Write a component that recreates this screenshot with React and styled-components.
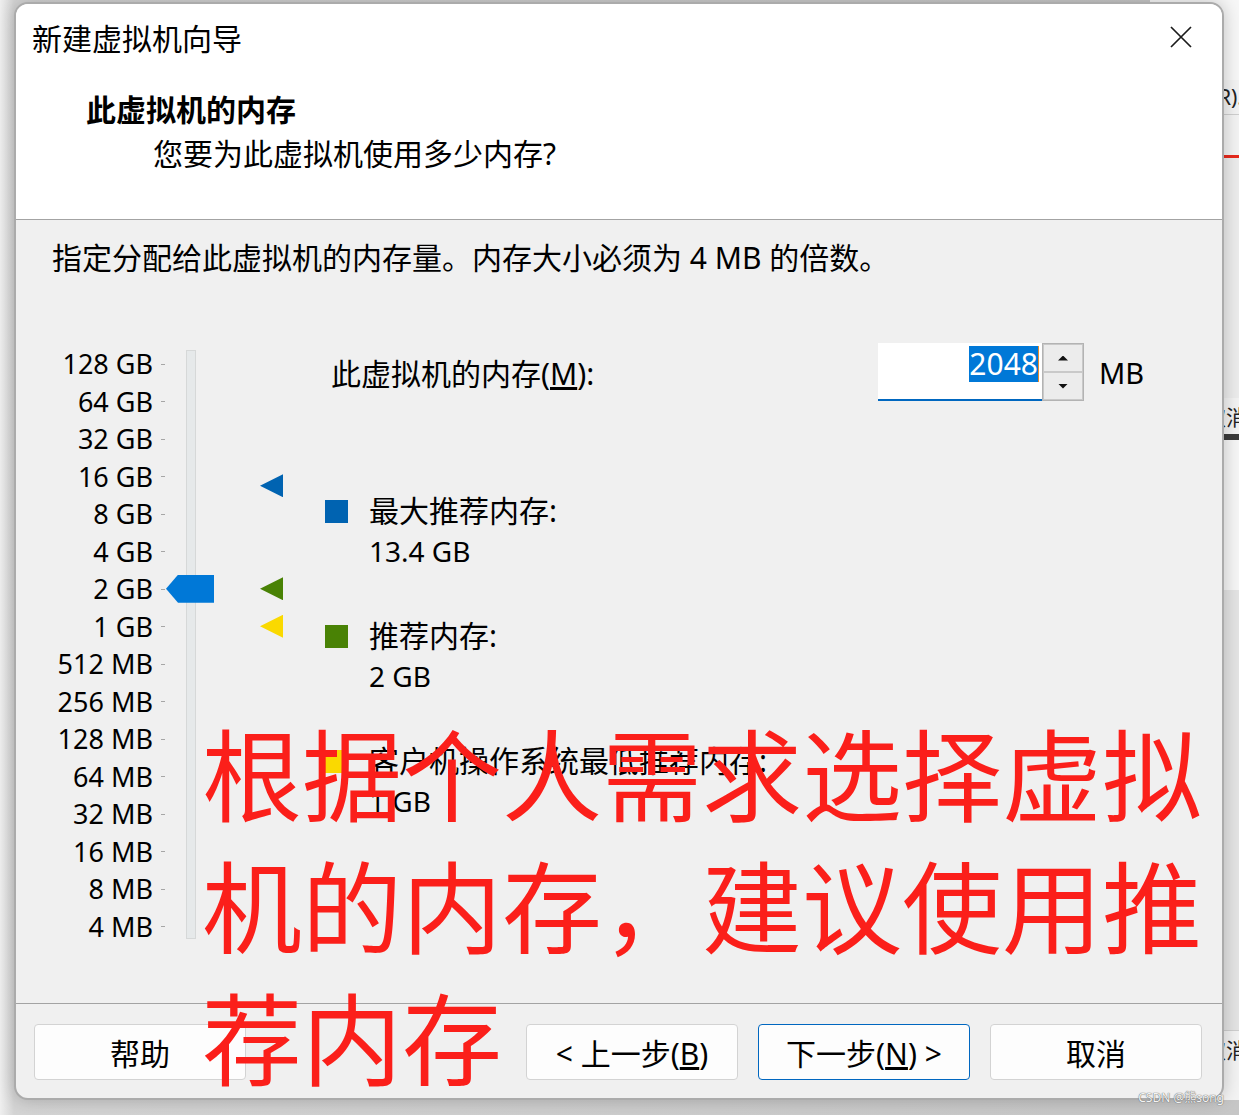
import React from 'react';
import styled, { createGlobalStyle } from 'styled-components';

const UI_FONT = `"Noto Sans", "Noto Sans CJK SC", sans-serif`;

const GlobalStyle = createGlobalStyle`
  html, body {
    margin: 0;
    padding: 0;
  }
  body {
    width: 1239px;
    height: 1115px;
    overflow: hidden;
    font-family: ${UI_FONT};
    color: #000;
  }
`;

const Desktop = styled.div`
  position: relative;
  width: 1239px;
  height: 1115px;
  box-sizing: border-box;
  padding: 2px 0 0 14px;
  overflow: hidden;
  background: linear-gradient(90deg, #efefef 0, #d4d4d4 14px, #c6c6c6 100%);
`;

/* window of the app behind the wizard: only a thin strip shows */
const BackWindow = styled.div`
  position: absolute;
  left: 1150px;
  top: 0;
  width: 120px;
  height: 1100px;
  background: #f3f3f3;
  display: flex;
  flex-direction: column;
  font-size: 21px;
  color: #222;
`;

const BackRow = styled.div`
  height: ${(p) => p.h}px;
  margin-top: ${(p) => p.mt || 0}px;
  background: ${(p) => p.bg || 'transparent'};
  border-bottom: ${(p) => (p.line ? '1px solid #cfcfcf' : 'none')};
  display: flex;
  align-items: center;
  padding-left: ${(p) => p.pl || 68}px;
  white-space: nowrap;
`;

const Dialog = styled.div`
  position: relative;
  z-index: 1;
  width: 1210px;
  height: 1098px;
  box-sizing: border-box;
  border: 2px solid #ababab;
  border-radius: 14px;
  background: #f0f0f0;
  overflow: hidden;
  box-shadow: 0 0 18px rgba(0, 0, 0, 0.22);
  display: flex;
  flex-direction: column;
`;

const Header = styled.div`
  background: #fff;
  height: 215px;
  border-bottom: 1px solid #a3a3a3;
  display: flex;
  flex-direction: column;
`;

const TitleBar = styled.div`
  height: 66px;
  display: flex;
  align-items: center;
  justify-content: space-between;
  padding: 0 30px 0 16px;
`;

const Title = styled.div`
  font-size: 30px;
  font-family: "Noto Sans CJK SC", sans-serif;
`;

const CloseButton = styled.button`
  border: 0;
  background: none;
  padding: 0;
  width: 22px;
  height: 22px;
  display: flex;
`;

const Heading = styled.div`
  margin-top: 18px;
  padding-left: 70px;
  line-height: 40px;
  font-size: 30px;
  font-weight: 700;
  font-family: "Noto Sans CJK SC", sans-serif;
`;

const SubHeading = styled.div`
  margin-top: 6px;
  padding-left: 137px;
  line-height: 40px;
  font-size: 30px;
`;

const Body = styled.div`
  flex: 1;
  display: flex;
  flex-direction: column;
  padding-top: 18px;
`;

const Description = styled.div`
  padding-left: 36px;
  line-height: 40px;
  font-size: 30px;
`;

const Main = styled.div`
  margin-top: 67px;
  display: flex;
  align-items: flex-start;
`;

const ScaleLabels = styled.div`
  display: flex;
  flex-direction: column;
  width: 150px;
`;

const ScaleLabel = styled.div`
  position: relative;
  height: 37.5px;
  line-height: 37.5px;
  text-align: right;
  padding-right: 13px;
  font-size: 27px;

  &::after {
    content: '';
    position: absolute;
    right: 1px;
    top: 50%;
    width: 4px;
    height: 1px;
    background: #a6a6a6;
  }
`;

const Track = styled.div`
  position: relative;
  margin: 5px 0 0 20px;
  width: 8px;
  height: 587px;
  background: #e6e9ea;
  border: 1px solid #d6d8d8;
`;

const Thumb = styled.div`
  position: absolute;
  left: -21px;
  width: 48px;
  height: 28px;
  background: #0078d7;
  clip-path: polygon(0 50%, 25% 0, 100% 0, 100% 100%, 25% 100%);
`;

const MarkerColumn = styled.div`
  position: relative;
  margin-left: 64px;
  width: 23px;
  height: 600px;
`;

const Marker = styled.div`
  position: absolute;
  left: 0;
  width: 23px;
  height: 23px;
  background: ${(p) => p.color};
  clip-path: polygon(0 50%, 100% 0, 100% 100%);
`;

const Panel = styled.div`
  margin: -2px 0 0 42px;
  display: flex;
  flex-direction: column;
`;

const MemoryRow = styled.div`
  display: flex;
  align-items: center;
  height: 58px;
`;

const MemoryLabel = styled.div`
  width: 547px;
  padding-left: 6px;
  font-size: 30px;
`;

const SpinInput = styled.div`
  width: 164px;
  height: 58px;
  box-sizing: border-box;
  background: #fff;
  border-bottom: 2px solid #0067c0;
  display: flex;
  justify-content: flex-end;
  align-items: flex-start;
  padding: 3px 3px 0 0;
`;

const Selected = styled.span`
  background: #0078d7;
  color: #fff;
  font-size: 30px;
  line-height: 36px;
  border-right: 1px solid #e58b2c;
`;

const SpinButtons = styled.div`
  display: flex;
  flex-direction: column;
  width: 42px;
  height: 58px;
  box-sizing: border-box;
  border: 1px solid #b3b3b3;
`;

const SpinButton = styled.div`
  flex: 1;
  background: #ececec;
  border: 1px solid #c9c9c9;
  display: flex;
  align-items: center;
  justify-content: center;

  &::before {
    content: '';
    width: 10px;
    height: 5px;
    background: #111;
    clip-path: ${(p) =>
      p.up ? 'polygon(50% 0, 100% 100%, 0 100%)' : 'polygon(0 0, 100% 0, 50% 100%)'};
  }
`;

const Unit = styled.div`
  margin-left: 15px;
  font-size: 29px;
`;

const Legend = styled.div`
  margin-top: ${(p) => p.mt}px;
  display: flex;
  flex-direction: column;
`;

const LegendTitle = styled.div`
  display: flex;
  align-items: center;
  gap: 21px;
  line-height: 40px;
  font-size: 30px;
`;

const Swatch = styled.span`
  width: 23px;
  height: 23px;
  background: ${(p) => p.color};
`;

const LegendValue = styled.div`
  padding-left: 44px;
  line-height: 40px;
  font-size: 28px;
`;

const Footer = styled.div`
  height: 95px;
  box-sizing: border-box;
  border-top: 1px solid #a3a3a3;
  display: flex;
  padding: 20px 20px 0 18px;
  gap: 20px;
`;

const Button = styled.button`
  width: 212px;
  height: 56px;
  box-sizing: border-box;
  margin-left: ${(p) => (p.push ? 'auto' : '0')};
  background: #fdfdfd;
  border: 1px solid ${(p) => (p.primary ? '#0067c0' : '#d3d3d3')};
  border-radius: 4px;
  font-family: ${UI_FONT};
  font-size: 30px;
  color: #000;
  padding: 0;
`;

const Annotation = styled.div`
  position: absolute;
  z-index: 2;
  left: 202px;
  top: 705px;
  font-family: "Noto Sans CJK SC", sans-serif;
  font-size: 100px;
  line-height: 132px;
  font-weight: 400;
  color: #fb1f1a;
  white-space: nowrap;
`;

const Watermark = styled.div`
  position: absolute;
  z-index: 2;
  right: 15px;
  bottom: 9px;
  font-size: 12px;
  color: #f4f4f4;
  text-shadow: 0 0 1px #666, 0 0 1px #666;
`;

const scale = [
  '128 GB', '64 GB', '32 GB', '16 GB', '8 GB', '4 GB', '2 GB', '1 GB',
  '512 MB', '256 MB', '128 MB', '64 MB', '32 MB', '16 MB', '8 MB', '4 MB',
];

const ROW = 37.5;
// position on the log scale: 128 GB is step 0, each step halves
const stepOf = (gb) => Math.log2(128 / gb);
const centerOf = (gb) => stepOf(gb) * ROW + ROW / 2;

const markers = [
  { gb: 13.4, color: '#0063b1' },
  { gb: 2, color: '#498205' },
  { gb: 1, color: '#fad900' },
];

const legends = [
  { color: '#0063b1', title: '最大推荐内存:', value: '13.4 GB', mt: 90 },
  { color: '#498205', title: '推荐内存:', value: '2 GB', mt: 45 },
  { color: '#fad900', title: '客户机操作系统最低推荐内存:', value: '1 GB', mt: 45 },
];

function CloseIcon() {
  return (
    <svg width="22" height="22" viewBox="0 0 22 22">
      <path d="M1 1 L21 21 M21 1 L1 21" stroke="#1b1b1b" strokeWidth="1.7" fill="none" />
    </svg>
  );
}

export default function App() {
  const memoryGb = 2;

  return (
    <>
      <GlobalStyle />
      <Desktop>
        <BackWindow>
          <BackRow h={80} bg="#f7f7f7" />
          <BackRow h={34} pl={68} line>R).</BackRow>
          <BackRow h={3} mt={40} bg="#e8291c" />
          <BackRow h={240} bg="#ececec" />
          <BackRow h={36} pl={55}>取消</BackRow>
          <BackRow h={6} bg="#3a3a3a" />
          <BackRow h={150} bg="#f6f6f6" />
          <BackRow h={440} bg="#e4e4e4" line />
          <BackRow h={36} pl={55}>取消</BackRow>
        </BackWindow>

        <Dialog>
          <Header>
            <TitleBar>
              <Title>新建虚拟机向导</Title>
              <CloseButton aria-label="close">
                <CloseIcon />
              </CloseButton>
            </TitleBar>
            <Heading>此虚拟机的内存</Heading>
            <SubHeading>您要为此虚拟机使用多少内存?</SubHeading>
          </Header>

          <Body>
            <Description>指定分配给此虚拟机的内存量。内存大小必须为 4 MB 的倍数。</Description>

            <Main>
              <ScaleLabels>
                {scale.map((s) => (
                  <ScaleLabel key={s}>{s}</ScaleLabel>
                ))}
              </ScaleLabels>

              <Track>
                <Thumb style={{ top: centerOf(memoryGb) - 5 - 1 - 14 }} />
              </Track>

              <MarkerColumn>
                {markers.map((m) => (
                  <Marker key={m.color} color={m.color} style={{ top: centerOf(m.gb) - 11.5 }} />
                ))}
              </MarkerColumn>

              <Panel>
                <MemoryRow>
                  <MemoryLabel>
                    此虚拟机的内存(<u>M</u>):
                  </MemoryLabel>
                  <SpinInput>
                    <Selected>2048</Selected>
                  </SpinInput>
                  <SpinButtons>
                    <SpinButton up />
                    <SpinButton />
                  </SpinButtons>
                  <Unit>MB</Unit>
                </MemoryRow>

                {legends.map((l) => (
                  <Legend key={l.title} mt={l.mt}>
                    <LegendTitle>
                      <Swatch color={l.color} />
                      {l.title}
                    </LegendTitle>
                    <LegendValue>{l.value}</LegendValue>
                  </Legend>
                ))}
              </Panel>
            </Main>
          </Body>

          <Footer>
            <Button>帮助</Button>
            <Button push>
              &lt; 上一步(<u>B</u>)
            </Button>
            <Button primary>
              下一步(<u>N</u>) &gt;
            </Button>
            <Button>取消</Button>
          </Footer>
        </Dialog>

        <Annotation>
          根据个人需求选择虚拟
          <br />
          机的内存，建议使用推
          <br />
          荐内存
        </Annotation>

        <Watermark>CSDN @熊song</Watermark>
      </Desktop>
    </>
  );
}
